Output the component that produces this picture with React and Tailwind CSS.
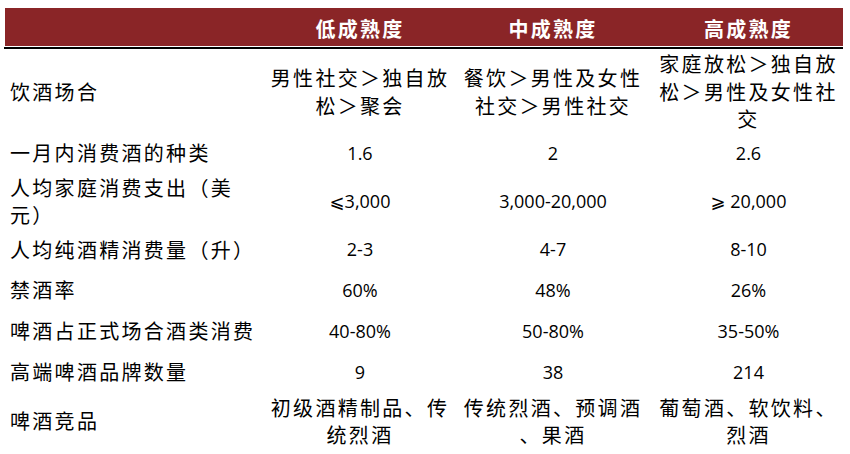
import React from "react";

const cjk = "font-['Noto_Sans_CJK_SC',sans-serif]";
const num = "font-['Open_Sans','DejaVu_Sans',sans-serif]";

const rows = [
  {
    h: "h-[83px]",
    label: ["饮酒场合"],
    cells: [
      { t: ["男性社交＞独自放", "松＞聚会"] },
      { t: ["餐饮＞男性及女性", "社交＞男性社交"] },
      { t: ["家庭放松＞独自放", "松＞男性及女性社", "交"] },
    ],
  },
  { h: "h-[40px]", label: ["一月内消费酒的种类"], cells: [{ n: "1.6" }, { n: "2" }, { n: "2.6" }] },
  {
    h: "h-[56px]",
    label: ["人均家庭消费支出（美", "元）"],
    cells: [{ n: "⩽3,000" }, { n: "3,000-20,000" }, { n: "⩾ 20,000" }],
  },
  { h: "h-[41px]", label: ["人均纯酒精消费量（升）"], cells: [{ n: "2-3" }, { n: "4-7" }, { n: "8-10" }] },
  { h: "h-[40px]", label: ["禁酒率"], cells: [{ n: "60%" }, { n: "48%" }, { n: "26%" }] },
  { h: "h-[42px]", label: ["啤酒占正式场合酒类消费"], cells: [{ n: "40-80%" }, { n: "50-80%" }, { n: "35-50%" }] },
  { h: "h-[40px]", label: ["高端啤酒品牌数量"], cells: [{ n: "9" }, { n: "38" }, { n: "214" }] },
  {
    h: "h-[58px]",
    label: ["啤酒竞品"],
    cells: [
      { t: ["初级酒精制品、传", "统烈酒"] },
      { t: ["传统烈酒、预调酒", "、果酒"] },
      { t: ["葡萄酒、软饮料、", "烈酒"] },
    ],
  },
];

const Lines = ({ lines }) => (
  <div className={`${cjk} text-[20px] leading-[27.5px] tracking-[2.3px] text-black whitespace-nowrap`}>
    {lines.map((l, i) => (
      <div key={i}>{l}</div>
    ))}
  </div>
);

const App = () => {
  return (
    <div className="w-[850px] h-[454px] bg-white overflow-hidden pt-[8px]">
      <div className="ml-[5px] w-[838px]">
        <div className="h-[38px] bg-[#8a2527] grid grid-cols-[263px_184px_202px_189px] items-center">
          <div></div>
          {["低成熟度", "中成熟度", "高成熟度"].map((t) => (
            <div
              key={t}
              className={`${cjk} text-center text-white font-bold text-[20px] tracking-[2.3px] pt-[4px]`}
            >
              {t}
            </div>
          ))}
        </div>
        <div className="h-[1px]"></div>
        <div className="h-[2px] bg-black -ml-[1px]"></div>
        <div className="grid grid-cols-[263px_184px_202px_189px] mt-[1px]">
          {rows.map((r, ri) => (
            <React.Fragment key={ri}>
              <div className={`${r.h} flex items-center pl-[5px]`}>
                <Lines lines={r.label} />
              </div>
              {r.cells.map((c, ci) => (
                <div key={ci} className={`${r.h} flex items-center justify-center text-center`}>
                  {c.t ? (
                    <Lines lines={c.t} />
                  ) : (
                    <span className={`${num} text-[18px] text-black whitespace-nowrap`}>{c.n}</span>
                  )}
                </div>
              ))}
            </React.Fragment>
          ))}
        </div>
      </div>
    </div>
  );
};

export default App;
